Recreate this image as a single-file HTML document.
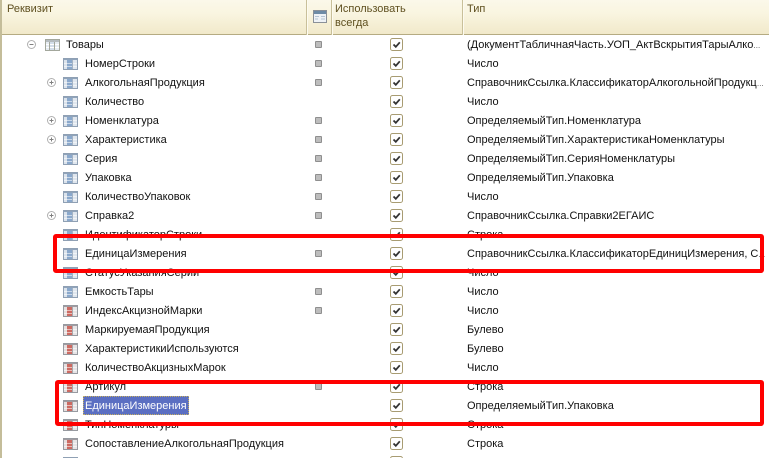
<!DOCTYPE html>
<html><head><meta charset="utf-8"><style>
html,body{margin:0;padding:0;background:#fff}
#p{position:relative;width:769px;height:458px;overflow:hidden;background:#fff;font:11px/19px "Liberation Sans",sans-serif;color:#111}
#h{position:absolute;left:0;top:0;width:769px;height:34px;background:linear-gradient(#fbf8ea,#f9f5e0 40%,#f1e9ca);border-bottom:1px solid #b5ab82}
.sep{position:absolute;top:0;height:35px;width:1px;background:#c9c09a;box-shadow:1px 0 0 #fdfbf0}
.ht{position:absolute;color:#5f5020;line-height:14px}
#l{position:absolute;left:0;top:0;width:2px;height:458px;background:#c4bd9a}
.r{position:absolute;left:0;width:769px;height:19px}
.n{position:absolute;left:85px;top:1px;white-space:nowrap}
.t{position:absolute;left:467px;top:1px;white-space:nowrap}
.t small{font-size:7px}
.i{position:absolute;left:63px;top:4px;width:15px;height:12px}
.c{position:absolute;left:390px;top:3px;width:13px;height:13px}
.s{position:absolute;left:315px;top:6px;width:5px;height:5px;background:#bdbdbd;border:1px solid #8f8f8f;border-radius:1px}
.e{position:absolute;left:47px;top:5px;width:9px;height:9px}
.box{position:absolute;border:4px solid #f00;border-radius:3px;box-sizing:border-box}
.sel{background:#5b6fc2;color:#fff;outline:1px dotted #c8b060;outline-offset:-1px;padding:0 2px;margin:0 -2px;line-height:19px;height:19px;display:inline-block;position:relative;top:-1px}
.sel b{font-weight:normal;position:relative;top:1px}
</style></head><body><div id="p">
<svg width="0" height="0" style="position:absolute">
<symbol id="b" viewBox="0 0 15 12"><rect x=".5" y=".5" width="14" height="11" fill="#fff" stroke="#8fa0b4"/><rect x="1" y="1" width="13" height="1" fill="#8fa3ba"/><rect x="1" y="2" width="3" height="9" fill="#dbe3ec"/><rect x="4" y="2" width="5" height="9" fill="#8aa8cc"/><rect x="10" y="2" width="4" height="9" fill="#dfe6ee"/><path d="M1 5.500h13M1 8.500h13" stroke="#fff" stroke-opacity=".55"/><path d="M9.500 2v9" stroke="#a4b3c4"/></symbol>
<symbol id="d" viewBox="0 0 15 12"><rect x=".5" y=".5" width="14" height="11" fill="#fff" stroke="#979aa0"/><rect x="1" y="1" width="13" height="1" fill="#a09ba0"/><rect x="1" y="2" width="3" height="9" fill="#e6dfdf"/><rect x="4" y="2" width="5" height="9" fill="#cc6a62"/><rect x="10" y="2" width="4" height="9" fill="#e6e4e6"/><path d="M1 5.500h13M1 8.500h13" stroke="#fff" stroke-opacity=".55"/><path d="M9.500 2v9" stroke="#a8a8ac"/></symbol>
<symbol id="g" viewBox="0 0 15 12"><rect x=".5" y=".5" width="14" height="11" fill="#fff" stroke="#a3a79c"/><rect x="1" y="1" width="13" height="2" fill="#b5bcc0"/><rect x="1" y="3" width="3" height="8" fill="#e6ecf2"/><rect x="5" y="3" width="4" height="8" fill="#d3deea"/><rect x="10" y="3" width="4" height="8" fill="#e6ecf2"/><path d="M1 5.500h13M1 8.500h13" stroke="#fff"/><path d="M4.500 3v8M9.500 3v8" stroke="#a3a79c"/></symbol>
<symbol id="k" viewBox="0 0 13 13"><rect x=".5" y=".5" width="12" height="12" rx="2" fill="#fff" stroke="#a89c72"/><path d="M3.500 6.500l2.300 2.300 4-4.500" fill="none" stroke="#333" stroke-width="1.800"/></symbol>
<symbol id="x" viewBox="0 0 9 9"><circle cx="4.500" cy="4.500" r="4" fill="#fff" stroke="#b0b0b0"/><path d="M2.500 4.500h4M4.500 2.500v4" stroke="#808080"/></symbol>
<symbol id="m" viewBox="0 0 9 9"><circle cx="4.500" cy="4.500" r="4" fill="#fff" stroke="#b0b0b0"/><path d="M2.500 4.500h4" stroke="#808080"/></symbol>
</svg>
<div id="h"></div>
<div class="sep" style="left:306px"></div><div class="sep" style="left:331px"></div><div class="sep" style="left:462px"></div>
<div class="ht" style="left:7px;top:2px">Реквизит</div>
<div class="ht" style="left:335px;top:2px">Использовать<br>всегда</div>
<div class="ht" style="left:467px;top:2px">Тип</div>
<svg style="position:absolute;left:313px;top:10px" width="14" height="13" viewBox="0 0 14 13"><rect x=".5" y=".5" width="13" height="12" fill="#eef2f6" stroke="#8a9098"/><rect x="1" y="1" width="12" height="3" fill="#6d8ba6"/><path d="M2 6.500h4M8 6.500h4M2 9h3M8 9h4" stroke="#b4c4d3"/></svg>
<div id="l"></div>

<div class="r" style="top:35px"><svg class="e" style="left:27px"><use href="#m"/></svg><svg class="i" style="left:45px"><use href="#g"/></svg><span class="n" style="left:66px">Товары</span><i class="s"></i><svg class="c"><use href="#k"/></svg><span class="t">(ДокументТабличнаяЧасть.УОП_АктВскрытияТарыАлко<small>…</small></span></div>
<div class="r" style="top:54px"><svg class="i"><use href="#b"/></svg><span class="n">НомерСтроки</span><i class="s"></i><svg class="c"><use href="#k"/></svg><span class="t">Число</span></div>
<div class="r" style="top:73px"><svg class="e"><use href="#x"/></svg><svg class="i"><use href="#b"/></svg><span class="n">АлкогольнаяПродукция</span><i class="s"></i><svg class="c"><use href="#k"/></svg><span class="t">СправочникСсылка.КлассификаторАлкогольнойПродукц<small>…</small></span></div>
<div class="r" style="top:92px"><svg class="i"><use href="#b"/></svg><span class="n">Количество</span><svg class="c"><use href="#k"/></svg><span class="t">Число</span></div>
<div class="r" style="top:111px"><svg class="e"><use href="#x"/></svg><svg class="i"><use href="#b"/></svg><span class="n">Номенклатура</span><i class="s"></i><svg class="c"><use href="#k"/></svg><span class="t">ОпределяемыйТип.Номенклатура</span></div>
<div class="r" style="top:130px"><svg class="e"><use href="#x"/></svg><svg class="i"><use href="#b"/></svg><span class="n">Характеристика</span><i class="s"></i><svg class="c"><use href="#k"/></svg><span class="t">ОпределяемыйТип.ХарактеристикаНоменклатуры</span></div>
<div class="r" style="top:149px"><svg class="i"><use href="#b"/></svg><span class="n">Серия</span><i class="s"></i><svg class="c"><use href="#k"/></svg><span class="t">ОпределяемыйТип.СерияНоменклатуры</span></div>
<div class="r" style="top:168px"><svg class="i"><use href="#b"/></svg><span class="n">Упаковка</span><i class="s"></i><svg class="c"><use href="#k"/></svg><span class="t">ОпределяемыйТип.Упаковка</span></div>
<div class="r" style="top:187px"><svg class="i"><use href="#b"/></svg><span class="n">КоличествоУпаковок</span><i class="s"></i><svg class="c"><use href="#k"/></svg><span class="t">Число</span></div>
<div class="r" style="top:206px"><svg class="e"><use href="#x"/></svg><svg class="i"><use href="#b"/></svg><span class="n">Справка2</span><i class="s"></i><svg class="c"><use href="#k"/></svg><span class="t">СправочникСсылка.Справки2ЕГАИС</span></div>
<div class="r" style="top:225px"><svg class="i"><use href="#b"/></svg><span class="n">ИдентификаторСтроки</span><svg class="c"><use href="#k"/></svg><span class="t">Строка</span></div>
<div class="r" style="top:244px"><svg class="i"><use href="#b"/></svg><span class="n">ЕдиницаИзмерения</span><i class="s"></i><svg class="c"><use href="#k"/></svg><span class="t">СправочникСсылка.КлассификаторЕдиницИзмерения, С<small>…</small></span></div>
<div class="r" style="top:263px"><svg class="i"><use href="#b"/></svg><span class="n">СтатусУказанияСерии</span><svg class="c"><use href="#k"/></svg><span class="t">Число</span></div>
<div class="r" style="top:282px"><svg class="i"><use href="#b"/></svg><span class="n">ЕмкостьТары</span><i class="s"></i><svg class="c"><use href="#k"/></svg><span class="t">Число</span></div>
<div class="r" style="top:301px"><svg class="i"><use href="#d"/></svg><span class="n">ИндексАкцизнойМарки</span><i class="s"></i><svg class="c"><use href="#k"/></svg><span class="t">Число</span></div>
<div class="r" style="top:320px"><svg class="i"><use href="#d"/></svg><span class="n">МаркируемаяПродукция</span><svg class="c"><use href="#k"/></svg><span class="t">Булево</span></div>
<div class="r" style="top:339px"><svg class="i"><use href="#d"/></svg><span class="n">ХарактеристикиИспользуются</span><svg class="c"><use href="#k"/></svg><span class="t">Булево</span></div>
<div class="r" style="top:358px"><svg class="i"><use href="#d"/></svg><span class="n">КоличествоАкцизныхМарок</span><svg class="c"><use href="#k"/></svg><span class="t">Число</span></div>
<div class="r" style="top:377px"><svg class="i"><use href="#d"/></svg><span class="n">Артикул</span><i class="s"></i><svg class="c"><use href="#k"/></svg><span class="t">Строка</span></div>
<div class="r" style="top:396px"><svg class="i"><use href="#d"/></svg><span class="n"><span class="sel"><b>ЕдиницаИзмерения</b></span></span><svg class="c"><use href="#k"/></svg><span class="t">ОпределяемыйТип.Упаковка</span></div>
<div class="r" style="top:415px"><svg class="i"><use href="#d"/></svg><span class="n">ТипНоменклатуры</span><svg class="c"><use href="#k"/></svg><span class="t">Строка</span></div>
<div class="r" style="top:434px"><svg class="i"><use href="#d"/></svg><span class="n">СопоставлениеАлкогольнаяПродукция</span><svg class="c"><use href="#k"/></svg><span class="t">Строка</span></div>
<div class="r" style="top:453px"><svg class="i"><use href="#b"/></svg><svg class="c"><use href="#k"/></svg></div>

<div class="box" style="left:53px;top:234px;width:711px;height:39px"></div>
<div class="box" style="left:55px;top:380px;width:709px;height:46px"></div>
</div></body></html>
